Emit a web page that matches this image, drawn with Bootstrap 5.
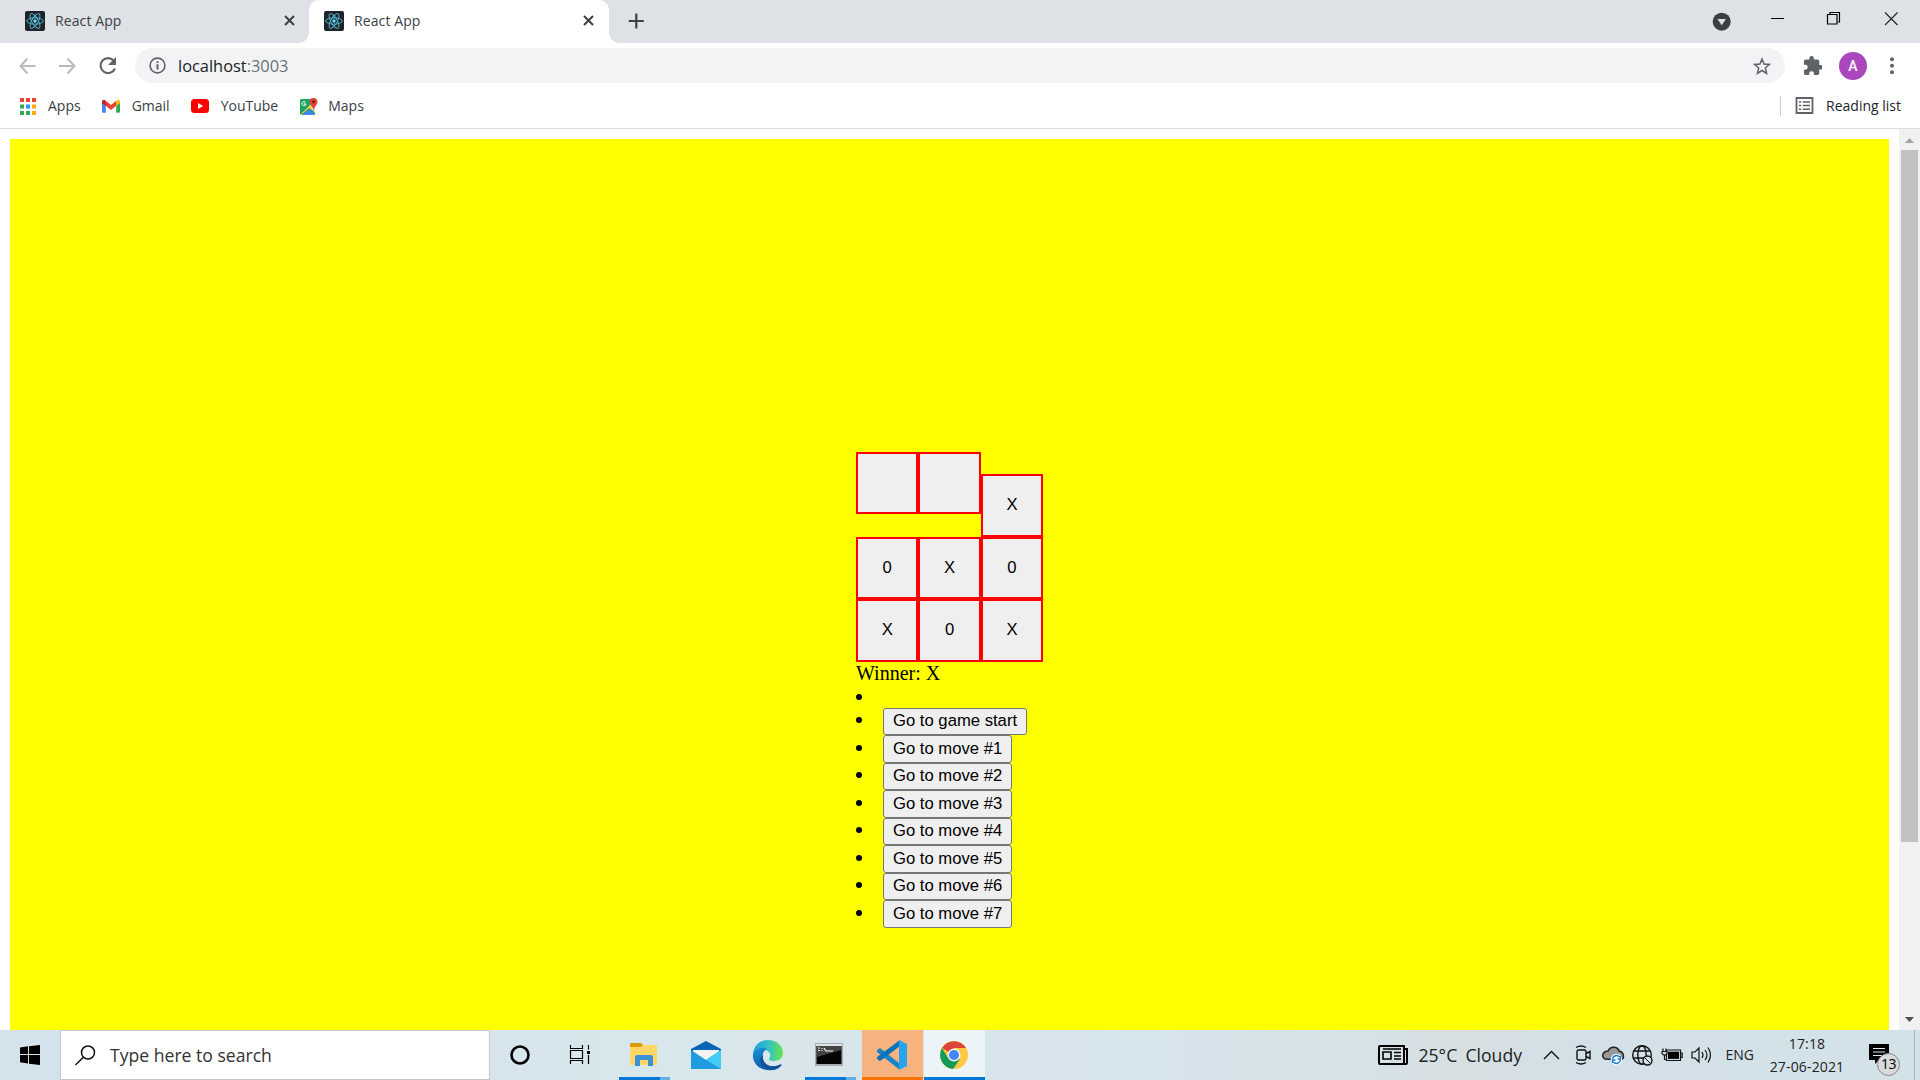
<!DOCTYPE html>
<html lang="en">
<head>
<meta charset="utf-8">
<title>React App</title>
<link href="https://cdn.jsdelivr.net/npm/bootstrap@5.3.0/dist/css/bootstrap.min.css" rel="stylesheet">
<style>
html,body{height:100%;overflow:hidden}
body{font-family:"Open Sans","Noto Sans",sans-serif;font-size:14px;line-height:20px;color:#3c4043;background:#fff}
svg{display:block;flex:none}
.screen{width:1920px;height:1080px}
.tabstrip{height:43px;background:#dee1e6}
.tab-item{height:43px;flex:none}
.tab-one{width:309px;padding:0 14px 2px 25px}
.tab-two{width:300px;padding:0 15px 2px 15px;background:#fff;border-radius:10px 10px 0 0;position:relative}
.tab-two::before,.tab-two::after{content:"";position:absolute;bottom:0;width:10px;height:10px}
.tab-two::before{left:-10px;background:radial-gradient(circle at 0 0,transparent 9.5px,#fff 10px)}
.tab-two::after{right:-10px;background:radial-gradient(circle at 100% 0,transparent 9.5px,#fff 10px)}
.tab-name{margin-left:10px;letter-spacing:.1px}
.toolbar{height:45px;padding:0 21px 0 19px}
.omnibox{height:35px;border-radius:18px;background:#f1f3f4;margin:0 18px;padding:0 14px;font-size:16.4px;color:#202124}
.omnibox .port{color:#6b7075}
.bookmarks{height:41px;padding:0 19px 4px;border-bottom:1px solid #dadce0}
.bm-text{margin-left:12px;margin-right:21px}
.avatar{width:28px;height:28px;background:#ab47bc;color:#fff;font:500 14px Roboto,sans-serif;margin:0 18px 0 17px}
.viewport-area{height:901px;padding-top:10px;padding-left:10px}
.game{flex:1;background:#ff0;margin-right:10px;padding:313px 0 0 846px;color:#000;font:20px/23px "Liberation Serif",serif}
.board-row{width:187.2px;height:62px}
.board-row.first{height:85px}
.board-row.last{height:63px}
.square{width:62.4px;height:62px;border:2px solid #f00;background:#efefef;padding:0 0 2px;color:#000;font:16.67px/19px "Liberation Sans",Arial,sans-serif;flex:none}
.square.tall{height:63px}
.moves{list-style:none;margin:-.1px 0 0;padding:0}
.moves li{height:27.5px;display:flex}
.moves li::before{content:"";width:6px;height:6px;border-radius:50%;background:#000;margin:9.3px 21px 0 0;flex:none}
.moves li.blank{height:23px}
.moves button{height:27.5px;border:1px solid #767676;border-radius:3px;background:#efefef;padding:0 9px 1px;color:#000;font:16.67px/22px "Liberation Sans",Arial,sans-serif}
.scroll{width:21px;background:#f1f1f1;margin-top:-10px;padding:9px 1px 8px 2px}
.scroll-thumb{height:692px;width:17px;background:#c1c1c1;margin-top:7px}
.taskbar{height:50px;background:linear-gradient(90deg,#d3e2eb 0,#d8e7ec 35%,#d6e4eb 60%,#d5e2e8 71%,#d7dfe1 76%,#d3e0e7 82%,#d3e2e9 100%);color:#222}
.search{width:430px;height:50px;border:1px solid #c4c8ca;background:#fff;padding-left:14px;font-size:17.6px;color:#333}
.search-text{margin-left:14px}
.task{width:61px;height:50px;flex:none;position:relative}
.task+.task{margin-left:1px}
.run::after{content:"";position:absolute;left:0;bottom:0;width:100%;height:3px;background:#0078d7}
.multi::after{width:51px;left:5px;background:linear-gradient(90deg,#0078d7 41px,#66aee8 41px)}
.code-task{background:#f6b27f}.code-task::after{background:#ff7300}
.chrome-task{background:#edf4f7}
.weather{font-size:17.6px;flex:none}
.temp{width:47px}
.sky{width:64px}
.lang{font-size:14px;margin-left:4px}
.clock{width:90px;font-size:14px;line-height:23px;text-align:center;letter-spacing:.15px;margin-left:8px}
.notice{margin:-2px 25px 0 17px}
.count{position:absolute;left:8px;top:9px;width:23px;height:23px;border-radius:50%;border:1px solid #888;background:#d8dadd;font-size:14px;line-height:20px;text-align:center;color:#000;letter-spacing:-.6px}
.desktop-edge{height:50px;width:6px;border-left:1px solid #a9b5bb}
</style>
<script src="https://cdn.jsdelivr.net/npm/bootstrap@5.3.0/dist/js/bootstrap.bundle.min.js"></script>
</head>
<body>
<svg width="0" height="0" class="position-absolute"><defs>
<g id="react"><rect width="20" height="20" rx="2" fill="#20232a"/><g fill="none" stroke="#55bdd8" stroke-width=".9"><ellipse cx="10" cy="10" rx="8.3" ry="3.2"/><ellipse cx="10" cy="10" rx="8.3" ry="3.2" transform="rotate(60 10 10)"/><ellipse cx="10" cy="10" rx="8.3" ry="3.2" transform="rotate(120 10 10)"/></g><circle cx="10" cy="10" r="1.7" fill="#61dafb"/></g>
<path id="close" d="M1 1l9 9M10 1l-9 9" stroke="#3c4043" stroke-width="2" fill="none"/>
</defs></svg>
<div class="screen d-flex flex-column">
  <header>
    <div class="tabstrip d-flex">
      <div class="tab-item tab-one d-flex align-items-center"><svg width="20" height="20"><use href="#react"/></svg><span class="tab-name">React App</span><svg class="ms-auto" width="11" height="11"><use href="#close"/></svg></div>
      <div class="tab-item tab-two d-flex align-items-center"><svg width="20" height="20"><use href="#react"/></svg><span class="tab-name">React App</span><svg class="ms-auto" width="11" height="11"><use href="#close"/></svg></div>
      <svg width="60" height="43"><path d="M27.300 13.500v15M19.800 21h15" stroke="#3c4043" stroke-width="2.200"/></svg>
      <svg class="ms-auto" width="220" height="43"><circle cx="21.700" cy="21.700" r="9" fill="#3c4043"/><path d="M17.500 19h8.400l-4.200 6.300z" fill="#dee1e6"/><path d="M71 18.500h13" stroke="#000"/><path d="M127.500 14.500h9.500v9.500h-9.500zM130 14v-1.500h9.500v9.500H138" fill="none" stroke="#000" stroke-width="1.200"/><path d="M185 12.500l12.500 12.500M197.500 12.500L185 25" stroke="#222" stroke-width="1.100"/></svg>
    </div>
    <div class="toolbar d-flex align-items-center">
      <svg width="98" height="26" fill="none"><g stroke="#b9bbbe" stroke-width="2"><path d="M16.500 13H2M8.500 5.500L1.500 13l7 7.500M40 13h15M48.500 5.500l7 7.500-7 7.500"/></g><path d="M95 8A7.500 7.500 0 1 0 96 15.500" stroke="#5f6368" stroke-width="2.100"/><path d="M97 4v8h-8z" fill="#5f6368"/></svg>
      <div class="omnibox flex-fill d-flex align-items-center"><svg width="17" height="17"><circle cx="8.500" cy="8.500" r="7.400" fill="none" stroke="#5f6368" stroke-width="1.600"/><path d="M8.500 4.200v1.900M8.500 7.300v5.300" stroke="#5f6368" stroke-width="2"/></svg><span class="ms-2 ps-1">localhost<span class="port">:3003</span></span>
      <svg class="ms-auto" width="18" height="18" viewBox="0 0 18 18"><path d="M9 2l2 5 5.500.4-4.200 3.600 1.300 5.300L9 13.500l-4.600 2.800L5.700 11 1.500 7.400 7 7z" fill="none" stroke="#5f6368" stroke-width="1.500"/></svg></div>
      <svg width="19" height="19" viewBox="1 1 21 21"><path fill="#5f6368" d="M20.500 11H19V7a2 2 0 0 0-2-2h-4V3.500a2.500 2.500 0 0 0-5 0V5H4a2 2 0 0 0-2 2v3.800h1.500a2.700 2.700 0 0 1 0 5.400H2V20a2 2 0 0 0 2 2h3.800v-1.500a2.700 2.700 0 0 1 5.400 0V22H17a2 2 0 0 0 2-2v-4h1.500a2.500 2.500 0 0 0 0-5z"/></svg>
      <div class="avatar rounded-circle d-flex align-items-center justify-content-center">A</div>
      <svg width="14" height="18"><g fill="#5f6368"><circle cx="7" cy="2.300" r="2"/><circle cx="7" cy="8.800" r="2"/><circle cx="7" cy="15.200" r="2"/></g></svg>
    </div>
    <div class="bookmarks d-flex align-items-center">
      <svg width="17" height="17"><g fill="#ea4335"><path d="M1 0h4v4H1zM7 0h4v4H7zM13 0h4v4h-4z"/></g><path fill="#34a853" d="M1 6.500h4v4H1zM1 13h4v4H1zM7 13h4v4H7z"/><path fill="#2196f3" d="M7 6.500h4v4H7z"/><path fill="#fbab00" d="M13 6.500h4v4h-4zM13 13h4v4h-4z"/></svg><span class="bm-text">Apps</span>
      <svg width="18" height="15" viewBox="0 0 19 15"><path d="M0 3h4v11H1.300Q0 14 0 13z" fill="#4285f4"/><path d="M15 3h4v10q0 1-1.300 1H15z" fill="#34a853"/><path d="M4 1.500l5.500 4.300L15 1.500v5.300l-5.500 4.300L4 6.800z" fill="#ea4335"/><path d="M15 1.500Q18.500-1 19 2.500V4l-4 3z" fill="#fbbc04"/><path d="M4 1.500Q.5-1 0 2.500V4l4 3z" fill="#c5221f"/></svg><span class="bm-text">Gmail</span>
      <svg width="18" height="14"><rect width="18" height="14" rx="3.500" fill="#f00"/><path d="M7 4l5.200 3L7 10z" fill="#fff"/></svg><span class="bm-text">YouTube</span>
      <svg width="17" height="19" viewBox="0 0 19 19" overflow="visible" preserveAspectRatio="xMinYMid slice"><rect x="1" y="2" width="15" height="16" rx="1.500" fill="#1da260"/><path d="M1 18L14 5l2 2v8l-6-4-8 7z" fill="#ffd84d"/><path d="M3 18l6.500-6L16 18z" fill="#4285f4"/><path d="M12 11l4-3v8z" fill="#ddd"/><path d="M6.500 5.300A2 2 0 1 0 7 7H5" stroke="#fff" fill="none"/><path d="M14.500 14c0-4-4-6-4-9a4 4 0 0 1 8 0c0 3-4 5-4 9z" fill="#e34336"/><circle cx="14.500" cy="4.800" r="1.500" fill="#7c1711"/></svg><span class="bm-text">Maps</span>
      <svg class="ms-auto" width="34" height="20"><path d="M.5 0v20" stroke="#cacdd1"/><path d="M16.500 2h16v15h-16z" fill="none" stroke="#5f6368" stroke-width="1.800"/><path d="M19 6h2.200m1.500 0H30M19 9.600h2.200m1.500 0H30M19 13.200h2.200m1.500 0H30" stroke="#5f6368" stroke-width="1.500"/></svg><span class="ps-1 ms-2 text-dark">Reading list</span>
    </div>
  </header>
  <div class="viewport-area d-flex">
    <main class="game">
      <div class="board-row first d-flex align-items-start"><button class="square"></button><button class="square"></button><button class="square tall align-self-end">X</button></div>
      <div class="board-row d-flex"><button class="square">0</button><button class="square">X</button><button class="square">0</button></div>
      <div class="board-row last d-flex"><button class="square tall">X</button><button class="square tall">0</button><button class="square tall">X</button></div>
      <div>Winner: X</div>
      <ul class="moves">
        <li class="blank"></li>
        <li><button>Go to game start</button></li><li><button>Go to move #1</button></li><li><button>Go to move #2</button></li><li><button>Go to move #3</button></li><li><button>Go to move #4</button></li><li><button>Go to move #5</button></li><li><button>Go to move #6</button></li><li><button>Go to move #7</button></li>
      </ul>
    </main>
    <div class="scroll d-flex flex-column"><svg width="17" height="5"><path d="M4 5h9L8.500 0z" fill="#a3a3a3"/></svg><div class="scroll-thumb"></div><svg class="mt-auto" width="17" height="5"><path d="M4 0h9L8.500 5z" fill="#505050"/></svg></div>
  </div>
  <footer class="taskbar d-flex align-items-center">
    <svg width="60" height="50"><path d="M20 17.500l8-1.200V24h-8zM29 16.200L40 15v9H29zM20 25h8v8.500l-8-1.200zM29 25h11v10l-11-1.300z"/></svg>
    <div class="search d-flex align-items-center"><svg width="21" height="21"><circle cx="13" cy="7.500" r="6.500" fill="none" stroke="#111" stroke-width="1.500"/><path d="M8.300 12.200L.5 20" stroke="#111" stroke-width="1.500"/></svg><span class="search-text">Type here to search</span></div>
    <div class="task"><svg width="61" height="50"><circle cx="30" cy="25" r="8.500" fill="none" stroke="#000" stroke-width="2.600"/></svg></div>
    <div class="task"><svg width="61" height="50"><path d="M18.500 15v3.500h12V15M18.500 34v-3.500h12V34M18.500 20.500h12v8h-12zM36.500 15v4.500M36.500 25v9" fill="none" stroke="#000" stroke-width="1.200"/><path d="M35 21h3v3h-3z"/></svg></div>
    <div class="task run multi"><svg width="61" height="50"><path d="M16 14q0-1 1-1h10l2 2v4H16z" fill="#dc9b05"/><path d="M16 17h11l2-2h13q1 0 1 1v19H16z" fill="#ffd767"/><path d="M21 36V27q0-2 2-2h14q2 0 2 2v9h-5v-6h-8v6z" fill="#3b91d5"/></svg></div>
    <div class="task"><svg width="61" height="50"><path d="M15 19l15-8 15 8v5H15z" fill="#0b65b7"/><path d="M17 20h26v8l-13 6-13-6z" fill="#f4f4f4"/><path d="M15 20l15 10 15-10v19H15z" fill="#219bdf"/><path d="M45 20v19L30 30z" fill="#42cbf7"/></svg></div>
    <div class="task"><svg width="61" height="50" viewBox="0 0 61 50"><defs><linearGradient id="eg"><stop stop-color="#279bd6"/><stop offset=".5" stop-color="#32c0cb"/><stop offset="1" stop-color="#69e647"/></linearGradient><linearGradient id="eb" x2=".5" y2="1"><stop stop-color="#188fd8"/><stop offset="1" stop-color="#0c58a5"/></linearGradient></defs><path d="M15 24C16 14 23 10 30 10c9 0 15 6 15 13 0 6-5 8-10 8-4 0-5-1-3-4 2-7-8-10-17-3z" fill="url(#eg)"/><path d="M15 24c3-6 9-7 14-5-4 2-5 6-4 10 2 7 9 9 16 6 2-1 3 0 1 1-3 4-8 5-13 4-9-1-15-8-14-16z" fill="url(#eb)"/><path d="M25 25c-2 9 8 14 17 10 2-1 2 0 1 1-4 4-9 5-14 3-8-3-8-11-4-14z" fill="#10519b"/></svg></div>
    <div class="task run multi"><svg width="61" height="50"><rect x="15" y="13" width="28" height="23" fill="#a5adb1"/><path d="M16 14h26v2H16z" fill="#dfe4e8"/><path d="M16.500 16h25v18h-25z" fill="#050505"/><path d="M17 16h24v4l-24 7z" fill="#444"/><path d="M18 18h2M18 20.500h2M22 18v1M22 20v1M24 18l2 3h7" fill="none" stroke="#fff" stroke-width="1.200"/></svg></div>
    <div class="task run code-task"><svg width="61" height="50"><path d="M15 20l3-2 20 16v6L15 22z" fill="#1684ca"/><path d="M15 29l3 2 20-15v-6L15 27z" fill="#0873b8"/><path d="M37 10l8 4v22l-8 4z" fill="#27a4ef"/></svg></div>
    <div class="task run chrome-task"><svg width="61" height="50"><circle cx="30" cy="25" r="14" fill="#fbc942"/><path d="M30 25L18 18A14 14 0 0 1 42 18H30z" fill="#db4437"/><path d="M18 18A14 14 0 0 0 29 39L36 29 24 28z" fill="#119b57"/><circle cx="30" cy="25" r="6.500" fill="#f5f5f5"/><circle cx="30" cy="25" r="5" fill="#4285f4"/></svg></div>
    <div class="ms-auto d-flex align-items-center">
      <svg width="44" height="50"><g fill="none" stroke="#000" stroke-width="2"><path d="M5 16h24v17h1M5 16q-1 0-1 1v16q0 1 1 1h26q1 0 1-1V19h-3"/><path d="M8 22h8v7H8zM8 19h18M19 22.500h7M19 26h7M19 29h7" stroke-width="1.600"/></g></svg>
      <span class="weather temp">25°C</span><span class="weather sky">Cloudy</span>
      <svg width="192" height="50"><g fill="none" stroke="#111" stroke-width="1.400"><path d="M14 29l7.500-7.500L29 29"/><rect x="47" y="20" width="9" height="10" rx="1.500"/><path d="M56 23.500l4-2v7l-4-2M46 17.500q5-3 10 0M46 32.500q5 3 10 0"/></g><path d="M75 29c-5-3-1-8 3-8 3-6 10-4 11 0 5 1 6 7 2 9z" fill="#999" stroke="#222" stroke-width="1.500"/><circle cx="86.500" cy="29.500" r="5.800" fill="#fff"/><path d="M82.500 29a4 4 0 0 1 7-2m1-1v3h-3M90.500 30a4 4 0 0 1-7 2m-1 1v-3h3" fill="none" stroke="#0b76ce" stroke-width="1.400"/><g fill="none" stroke="#111" stroke-width="1.400"><circle cx="112" cy="25" r="9.300"/><ellipse cx="112" cy="25" rx="4.200" ry="9.300"/><path d="M104 21h16M103 28h18"/></g><circle cx="117.500" cy="30.500" r="4.500" fill="#d3e2e9" stroke="#111" stroke-width="1.400"/><path d="M114.500 27.500l6 6" stroke="#111"/><path d="M136.500 20h14v10.500h-14zM151 23h1.200v4.500H151" fill="none" stroke="#111" stroke-width="1.200"/><path d="M138 21.700h11v7.200h-11z"/><path d="M133 18.500v3m3-3v3m-4 0h5v2l-1.500 1.500h-2L132 23.500zM134.500 25v4.500h2" fill="#d3e2e9" stroke="#111" stroke-width="1.200"/><path d="M162 22h3l4-4v14l-4-4h-3zM172 22q2 3 0 6M175 20q4 5 0 10M178 17.500q5 7.500 0 15" fill="none" stroke="#111" stroke-width="1.200"/></svg>
      <span class="lang">ENG</span>
      <div class="clock"><div>17:18</div><div>27-06-2021</div></div>
      <div class="notice position-relative"><svg width="20" height="20"><path d="M0 0h20v16H10l-4 4v-4H0z"/><path d="M4 4.500h12M4 8h12M4 11.500h12" stroke="#dce8ee" stroke-width="1.200"/></svg><span class="count">13</span></div>
      <div class="desktop-edge"></div>
    </div>
  </footer>
</div>
</body>
</html>
